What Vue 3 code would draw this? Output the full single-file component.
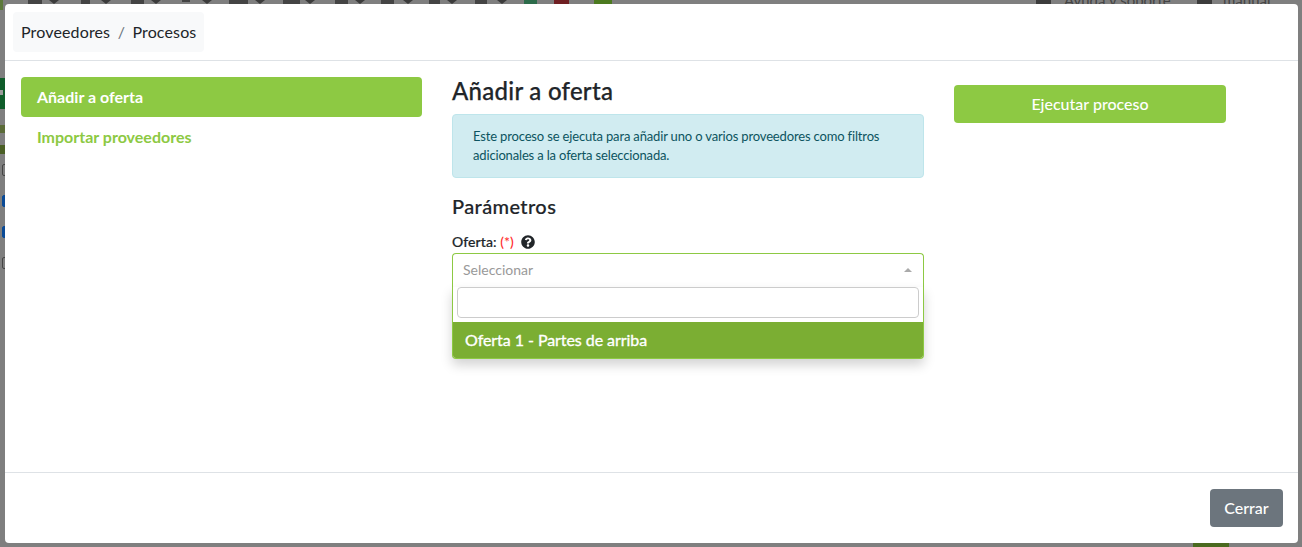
<script setup>
const topIcons = [
  { x: 28, w: 14, caret: 54 },
  { x: 81, w: 9, caret: 106 },
  { x: 131, w: 13, caret: 156 },
  { x: 182, w: 8, caret: 207, h: 2 },
  { x: 229, w: 19, caret: 260 },
  { x: 283, w: 17, caret: 310 },
  { x: 335, w: 13, caret: 360 },
  { x: 381, w: 13, caret: 408 },
  { x: 429, w: 11, caret: 452 },
  { x: 475, w: 12, caret: 502 },
]
const topTiles = [
  { x: 524, w: 13, color: '#2c6b4a' },
  { x: 554, w: 15, color: '#6f1f22' },
  { x: 594, w: 18, color: '#4c7a20' },
]
const leftMarks = [
  { top: 78, height: 31, color: '#0f5c2a' },
  { top: 125, height: 8, color: '#5b6b38' },
  { top: 145, height: 9, color: '#4a5f25' },
]
const leftChecks = [
  { top: 164, blue: false },
  { top: 195, blue: true },
  { top: 226, blue: true },
  { top: 257, blue: false },
]
</script>

<template>
  <div class="page">
    <div class="under">
      <template v-for="t in topIcons" :key="t.x">
        <span class="under-icon" :style="{ left: t.x + 'px', width: t.w + 'px', height: (t.h || 4) + 'px' }"></span>
        <span class="under-caret" :style="{ left: t.caret - 5 + 'px' }"></span>
      </template>
      <span
        v-for="t in topTiles"
        :key="t.x"
        class="under-icon"
        :style="{ left: t.x + 'px', width: t.w + 'px', background: t.color }"
      ></span>
      <span class="under-tile" style="left: 1036px"></span>
      <span class="under-tile" style="left: 1197px"></span>
      <span class="under-help">Ayuda y soporte</span>
      <span class="under-manual">manual</span>
      <span class="under-corner"></span>
      <span
        v-for="m in leftMarks"
        :key="m.top"
        class="under-mark"
        :style="{ top: m.top + 'px', height: m.height + 'px', background: m.color }"
      ></span>
      <span class="under-plus"></span>
      <span
        v-for="c in leftChecks"
        :key="c.top"
        class="under-check"
        :class="{ blue: c.blue }"
        :style="{ top: c.top + 'px' }"
      ></span>
      <span class="under-green"></span>
    </div>

    <div class="modal">
      <header class="modal-header">
        <nav class="crumbs">
          <span class="crumb">Proveedores</span>
          <span class="sep">/</span>
          <span class="crumb">Procesos</span>
        </nav>
      </header>

      <div class="modal-body">
        <aside class="menu">
          <a class="menu-item active">Añadir a oferta</a>
          <a class="menu-item">Importar proveedores</a>
        </aside>

        <main class="main">
          <h2 class="title">Añadir a oferta</h2>
          <div class="alert">
            Este proceso se ejecuta para añadir uno o varios proveedores como filtros adicionales a la oferta seleccionada.
          </div>
          <h3 class="subtitle">Parámetros</h3>
          <label class="label">
            <span class="label-text">Oferta:</span> <span class="req">(*)</span>
            <svg class="help" viewBox="0 0 512 512" width="14" height="14" aria-hidden="true">
              <path fill="#212529" d="M504 256c0 137-111 248-248 248S8 393 8 256 119 8 256 8s248 111 248 248zM262.700 90c-54.500 0-89.300 23-116.500 63.800-3.500 5.300-2.300 12.400 2.800 16.300l34.700 26.300c5.200 3.900 12.600 3 16.700-2.100 17.900-22.700 30.100-35.800 57.300-35.800 20.400 0 45.700 13.100 45.700 32.900 0 15-12.400 22.700-32.500 34-23.500 13.200-54.600 29.600-54.600 70.600V300c0 6.600 5.400 12 12 12h56c6.600 0 12-5.400 12-12v-1.300c0-28.400 83-29.600 83-106.700 0-58-60.200-102-116.600-102zM256 338c-25.400 0-46 20.600-46 46s20.600 46 46 46 46-20.600 46-46-20.600-46-46-46z"/>
            </svg>
          </label>

          <div class="select">
            <div class="select-box">
              <span class="placeholder">Seleccionar</span>
              <span class="caret"></span>
            </div>
            <div class="dropdown">
              <div class="search"><input class="search-input" type="text" /></div>
              <div class="option">Oferta 1 - Partes de arriba</div>
            </div>
          </div>
        </main>

        <section class="actions">
          <button class="run" type="button">Ejecutar proceso</button>
        </section>
      </div>

      <footer class="modal-footer">
        <button class="close" type="button">Cerrar</button>
      </footer>
    </div>
  </div>
</template>

<style scoped>
.page {
  position: relative;
  width: 1302px;
  height: 547px;
  overflow: hidden;
  background: #7f7f7f;
  font-family: Lato, "Liberation Sans", sans-serif;
  color: #212529;
  padding: 4px 4px 4px 5px;
  box-sizing: border-box;
  display: flex;
}
.under {
  position: absolute;
  inset: 0;
}
.under-icon {
  position: absolute;
  top: 0;
  height: 4px;
  background: #444;
}
.under-caret {
  position: absolute;
  top: 0;
  border-left: 5px solid transparent;
  border-right: 5px solid transparent;
  border-top: 4px solid #3c3c3c;
}
.under-tile {
  position: absolute;
  top: 0;
  width: 15px;
  height: 4px;
  background: #3c3c3c;
}
.under-help,
.under-manual {
  position: absolute;
  top: -9px;
  font-size: 15px;
  color: #444;
}
.under-help { left: 1064px; }
.under-manual { left: 1223px; }
.under-corner {
  position: absolute;
  left: 0;
  top: 0;
  width: 3px;
  height: 10px;
  background: #5d7a3c;
}
.under-mark {
  position: absolute;
  left: 0;
  width: 5px;
}
.under-plus {
  position: absolute;
  left: 0;
  top: 90px;
  width: 3px;
  height: 5px;
  background: #9a9a9a;
}
.under-check {
  position: absolute;
  left: 2px;
  width: 6px;
  height: 12px;
  border: 1px solid #444;
  border-radius: 2px;
  box-sizing: border-box;
}
.under-check.blue {
  background: #0a4a96;
  border-color: #0a4a96;
}
.under-green {
  position: absolute;
  left: 1193px;
  top: 543px;
  width: 36px;
  height: 4px;
  background: #4a6a1f;
}

.modal {
  position: relative;
  flex: 1;
  display: flex;
  flex-direction: column;
  background: #fff;
  border-radius: 4px;
}
.modal-header {
  height: 57px;
  padding: 8px 8px 0;
  box-sizing: border-box;
  border-bottom: 1px solid #dee2e6;
  flex: none;
}
.crumbs {
  display: inline-flex;
  align-items: center;
  height: 40px;
  padding: 0 8px;
  background: #f8f9fa;
  border-radius: 4px;
  font-size: 16px;
  line-height: 24px;
}
.crumb { letter-spacing: 0.14px; }
.sep {
  padding: 0 7.5px;
  color: #6c757d;
}
.modal-body {
  flex: 1;
  display: flex;
  padding: 16px 16px 0;
  min-height: 0;
}
.menu {
  width: 401px;
  flex: none;
  margin-right: 30px;
}
.menu-item {
  display: block;
  height: 40px;
  padding: 0 16px;
  font-size: 16px;
  font-weight: 700;
  line-height: 39px;
  color: #8dc943;
  border-radius: 4px;
  box-sizing: border-box;
}
.menu-item.active {
  background: #8dc943;
  color: #fff;
}
.main {
  width: 472px;
  flex: none;
  margin-right: 30px;
}
.title {
  margin: 0;
  font-size: 24px;
  font-weight: 500;
  line-height: 27px;
  height: 37px;
  letter-spacing: 0.27px;
  -webkit-text-stroke: 0.25px #212529;
}
.alert {
  height: 64px;
  box-sizing: border-box;
  padding: 12px 20px;
  font-size: 13px;
  line-height: 19px;
  letter-spacing: -0.16px;
  color: #0c5460;
  background: #d1ecf1;
  border: 1px solid #bee5eb;
  border-radius: 4px;
}
.subtitle {
  margin: 16px 0 0;
  font-size: 20px;
  font-weight: 500;
  line-height: 24px;
  letter-spacing: 0.4px;
  -webkit-text-stroke: 0.2px #212529;
}
.label {
  display: block;
  margin-top: 15px;
  font-size: 14px;
  font-weight: 500;
  line-height: 18px;
  height: 20px;
}
.label-text {
  letter-spacing: 0.1px;
  -webkit-text-stroke: 0.2px #212529;
}
.req { color: #ff2a2a; }
.help {
  margin-left: 7px;
  vertical-align: -2px;
}
.select {
  position: relative;
  font-size: 14px;
}
.select-box {
  display: flex;
  align-items: center;
  justify-content: space-between;
  height: 34px;
  padding: 0 11px 2px 10px;
  box-sizing: border-box;
  border: 1px solid #8dc943;
  border-bottom: 0;
  border-radius: 4px 4px 0 0;
}
.placeholder { color: #999; }
.caret {
  border-left: 4.500px solid transparent;
  border-right: 4.500px solid transparent;
  border-bottom: 4.500px solid #aaa;
}
.dropdown {
  position: absolute;
  left: 0;
  right: 0;
  top: 34px;
  background: #fff;
  border: 1px solid #8dc943;
  border-top: 0;
  border-radius: 0 0 4px 4px;
  box-shadow: 0 6px 12px rgba(0, 0, 0, 0.175);
  overflow: hidden;
}
.search { padding: 0 4px 4px; }
.search-input {
  display: block;
  width: 100%;
  height: 31px;
  box-sizing: border-box;
  border: 1px solid #ccc;
  border-radius: 4px;
  outline: 0;
}
.option {
  height: 36px;
  padding: 0 12px;
  background: #7bae33;
  color: #fff;
  font-size: 16px;
  font-weight: 400;
  line-height: 36px;
  letter-spacing: -0.06px;
  -webkit-text-stroke: 0.35px #fff;
}
.actions {
  width: 272px;
  flex: none;
  padding-top: 8px;
}
.run {
  display: block;
  width: 100%;
  height: 38px;
  border: 0;
  border-radius: 4px;
  background: #8dc943;
  color: #fff;
  font: 500 16px/24px Lato, "Liberation Sans", sans-serif;
}
.modal-footer {
  height: 71px;
  flex: none;
  box-sizing: border-box;
  border-top: 1px solid #dee2e6;
  display: flex;
  justify-content: flex-end;
  padding: 16px 15px 0 0;
}
.close {
  width: 73px;
  height: 38px;
  border: 0;
  border-radius: 4px;
  background: #6c757d;
  color: #fff;
  font: 500 16px/24px Lato, "Liberation Sans", sans-serif;
}
</style>
